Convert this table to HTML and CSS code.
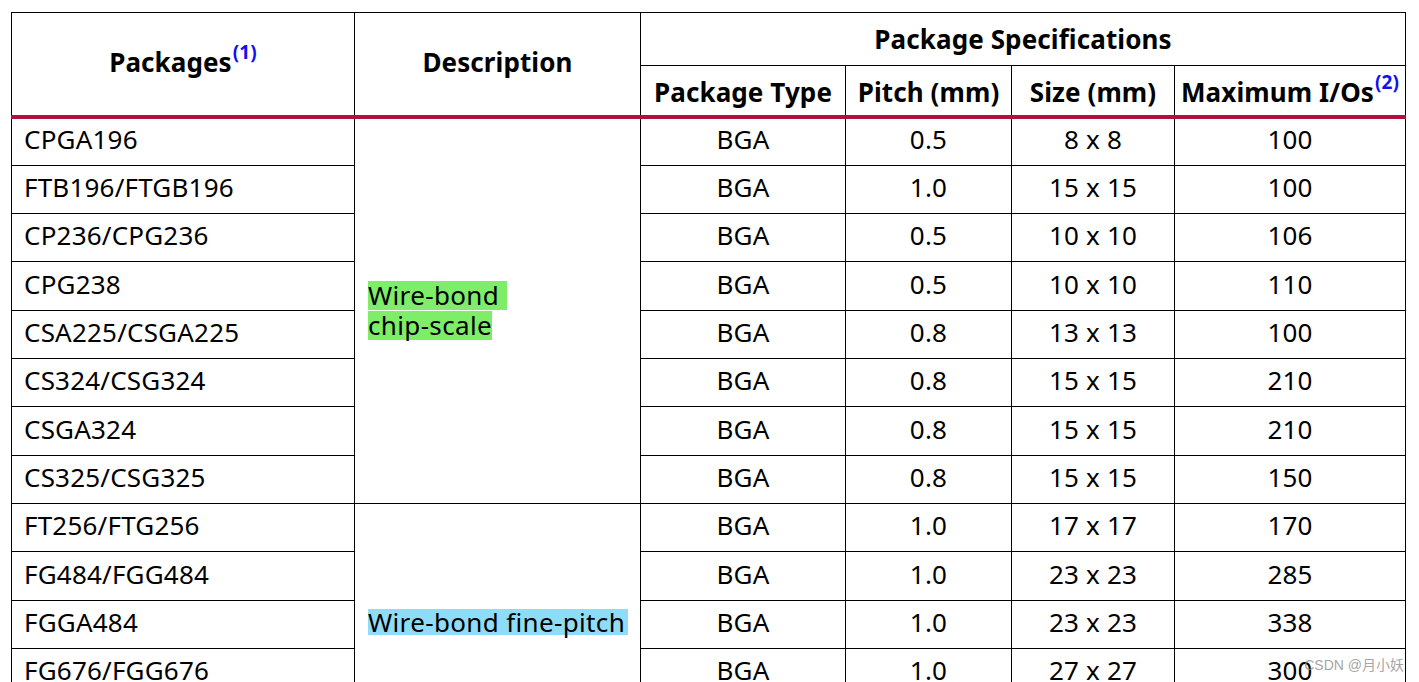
FILE: index.html
```html
<!DOCTYPE html>
<html>
<head>
<meta charset="utf-8">
<link rel="stylesheet" href="styles.css">
</head>
<body>
<div class="page">
<table class="spec">
  <colgroup>
    <col class="c1"><col class="c2"><col class="c3"><col class="c4"><col class="c5"><col class="c6">
  </colgroup>
  <thead>
    <tr class="h1">
      <th rowspan="2" class="hpkg">Packages<sup>(1)</sup></th>
      <th rowspan="2" class="hdesc">Description</th>
      <th colspan="4" class="hspec">Package Specifications</th>
    </tr>
    <tr class="h2">
      <th>Package Type</th>
      <th>Pitch (mm)</th>
      <th>Size (mm)</th>
      <th>Maximum I/Os<sup>(2)</sup></th>
    </tr>
  </thead>
  <tbody>
    <tr><td class="pkg">CPGA196</td><td rowspan="8" class="desc"><span class="hl green pad8">Wire-bond</span><br><span class="hl green">chip-scale</span></td><td>BGA</td><td>0.5</td><td>8 x 8</td><td>100</td></tr>
    <tr><td class="pkg">FTB196/FTGB196</td><td>BGA</td><td>1.0</td><td>15 x 15</td><td>100</td></tr>
    <tr><td class="pkg">CP236/CPG236</td><td>BGA</td><td>0.5</td><td>10 x 10</td><td>106</td></tr>
    <tr><td class="pkg">CPG238</td><td>BGA</td><td>0.5</td><td>10 x 10</td><td>110</td></tr>
    <tr><td class="pkg">CSA225/CSGA225</td><td>BGA</td><td>0.8</td><td>13 x 13</td><td>100</td></tr>
    <tr><td class="pkg">CS324/CSG324</td><td>BGA</td><td>0.8</td><td>15 x 15</td><td>210</td></tr>
    <tr><td class="pkg">CSGA324</td><td>BGA</td><td>0.8</td><td>15 x 15</td><td>210</td></tr>
    <tr><td class="pkg">CS325/CSG325</td><td>BGA</td><td>0.8</td><td>15 x 15</td><td>150</td></tr>
    <tr><td class="pkg">FT256/FTG256</td><td rowspan="5" class="desc"><span class="hl blue">Wire-bond fine-pitch</span></td><td>BGA</td><td>1.0</td><td>17 x 17</td><td>170</td></tr>
    <tr><td class="pkg">FG484/FGG484</td><td>BGA</td><td>1.0</td><td>23 x 23</td><td>285</td></tr>
    <tr><td class="pkg">FGGA484</td><td>BGA</td><td>1.0</td><td>23 x 23</td><td>338</td></tr>
    <tr><td class="pkg">FG676/FGG676</td><td>BGA</td><td>1.0</td><td>27 x 27</td><td>300</td></tr>
    <tr><td class="pkg">FGGA676</td><td>BGA</td><td>1.0</td><td>27 x 27</td><td>300</td></tr>
  </tbody>
</table>
<div class="watermark">CSDN @月小妖</div>
</div>
</body>
</html>
```
FILE: styles.css
```css
html, body {
  margin: 0;
  padding: 0;
  background: #fff;
}
body {
  font-family: "Noto Sans", "Noto Sans CJK SC", sans-serif;
  color: #000;
  overflow: hidden;
  height: 682px;
}
.page {
  position: relative;
  padding: 12px 0 0 11px;
  height: 670px;
}
.spec {
  border-collapse: collapse;
  table-layout: fixed;
  width: 1395px;
  font-size: 26px;
}
.c1 { width: 343px; }
.c2 { width: 286px; }
.c3 { width: 205px; }
.c4 { width: 166px; }
.c5 { width: 163px; }
.c6 { width: 231px; }

.spec th, .spec td {
  border: 1px solid #000;
  padding: 0 4px 5px;
  vertical-align: middle;
  text-align: center;
  white-space: nowrap;
}
.spec th {
  font-weight: 700;
  letter-spacing: 0.1px;
}
.h1 th { height: 51px; padding-bottom: 3px; }
.hspec { padding-bottom: 1px !important; padding-top: 0; }
.h2 th {
  height: 44px;
  padding-top: 4px;
  padding-bottom: 1px;
  border-bottom: 4px solid #b0103c;
}
.hpkg, .hdesc {
  border-bottom: 4px solid #b0103c !important;
  padding-top: 3px;
  padding-bottom: 5px !important;
}
sup {
  font-size: 19px;
  color: #1010f0;
  vertical-align: 13px;
  line-height: 0;
  margin-left: 1px;
}
.spec tbody td {
  height: 48.33px;
  box-sizing: border-box;
  letter-spacing: 0.2px;
}
.spec td.pkg {
  text-align: left;
  padding-left: 12px;
}
.spec td.desc {
  text-align: left;
  padding: 0 0 0 13px;
  line-height: 30px;
  letter-spacing: 0.35px;
}
.hl {
  display: inline-block;
  line-height: 29px;
  height: 29px;
  vertical-align: top;
}
.green { background: #7eed68; }
.blue { background: #8fdcf7; line-height: 26px; height: 26px; padding-right: 3px; }
.pad8 { padding-right: 8px; }
.watermark {
  position: absolute;
  right: 15px;
  bottom: 8px;
  font-family: "Liberation Sans", "Noto Sans CJK SC", sans-serif;
  font-size: 14px;
  color: rgba(140, 140, 140, 0.8);
}
```
